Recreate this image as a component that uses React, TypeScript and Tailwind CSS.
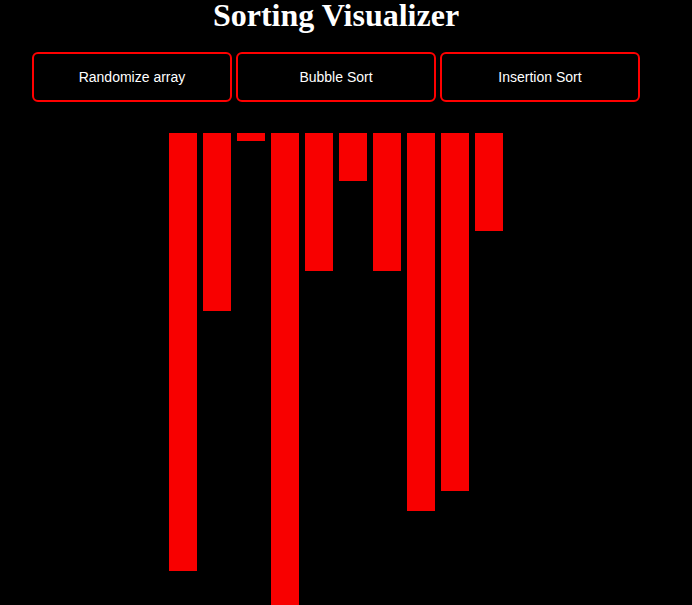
import React from "react";

const bars = [438, 178, 8, 500, 138, 48, 138, 378, 358, 98];
const buttons = ["Randomize array", "Bubble Sort", "Insertion Sort"];

export default function App() {
  return (
    <div className="min-h-screen bg-black overflow-hidden">
      <div className="w-[672px] h-[605px] overflow-hidden">
        <h1 className="m-0 text-center text-[32px] font-bold leading-[31px] text-white font-['Liberation_Serif',serif]">
          Sorting Visualizer
        </h1>
        <div className="mt-[21px] flex justify-center gap-[4px]">
          {buttons.map((b) => (
            <button
              key={b}
              className="w-[200px] h-[50px] rounded-[6px] border-2 border-[#ff0000] bg-black text-white text-[14px] font-['Liberation_Sans',Arial,sans-serif]"
            >
              {b}
            </button>
          ))}
        </div>
        <div className="mt-[31px] flex justify-center items-start gap-[6px]">
          {bars.map((h, i) => (
            <div key={i} className="w-[28px] bg-[#f80000]" style={{ height: h }} />
          ))}
        </div>
      </div>
    </div>
  );
}
